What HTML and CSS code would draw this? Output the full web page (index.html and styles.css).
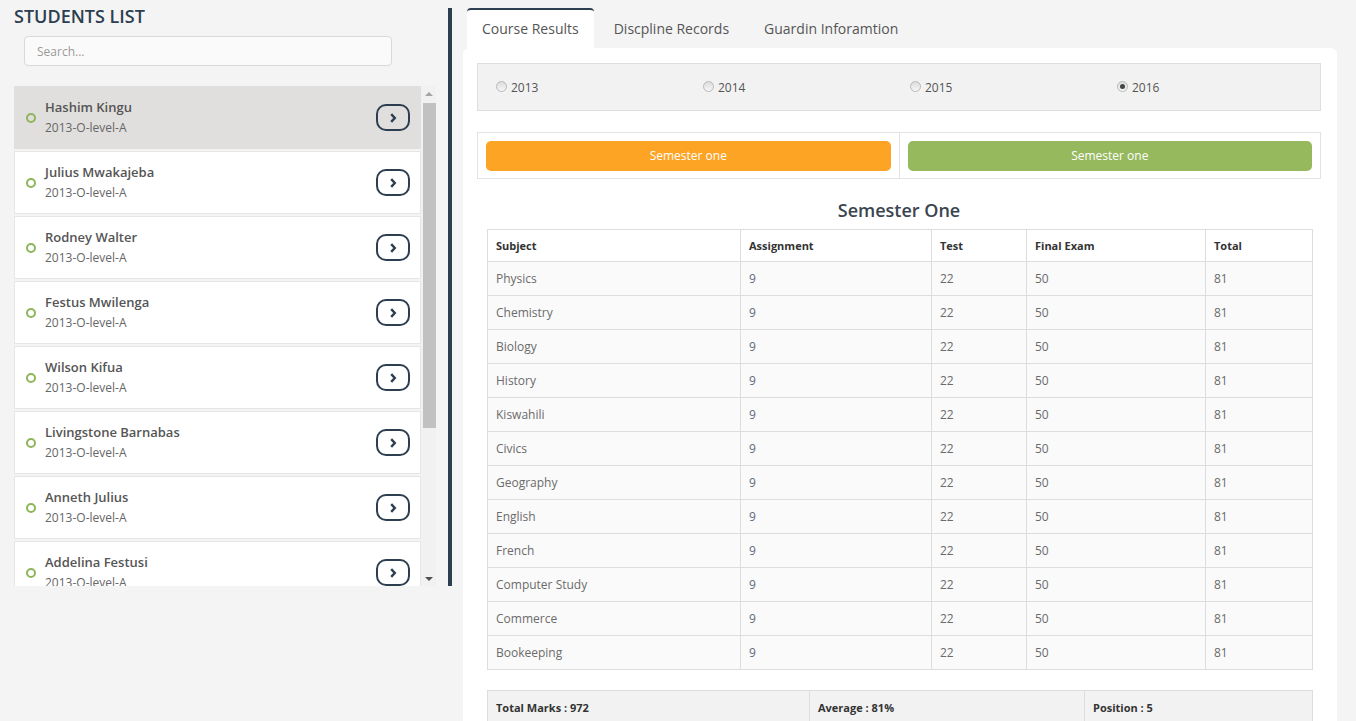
FILE: index.html
```html
<!DOCTYPE html>
<html>
<head>
<meta charset="utf-8">
<link rel="stylesheet" href="styles.css">
</head>
<body>
<div class="page">
  <aside class="sidebar">
    <h1 class="side-title">STUDENTS LIST</h1>
    <input class="search" type="text" placeholder="Search...">
    <div class="list-wrap">
      <div class="list">
        <div class="student active"><span class="ring"></span><div class="info"><div class="name">Hashim Kingu</div><div class="cls">2013-O-level-A</div></div><span class="go"><svg width="12" height="12" viewBox="0 0 12 12"><path d="M4.2 2.2 L7.8 6 L4.2 9.8" fill="none" stroke="#2c3e50" stroke-width="2.4"/></svg></span></div>
        <div class="student"><span class="ring"></span><div class="info"><div class="name">Julius Mwakajeba</div><div class="cls">2013-O-level-A</div></div><span class="go"><svg width="12" height="12" viewBox="0 0 12 12"><path d="M4.2 2.2 L7.8 6 L4.2 9.8" fill="none" stroke="#2c3e50" stroke-width="2.4"/></svg></span></div>
        <div class="student"><span class="ring"></span><div class="info"><div class="name">Rodney Walter</div><div class="cls">2013-O-level-A</div></div><span class="go"><svg width="12" height="12" viewBox="0 0 12 12"><path d="M4.2 2.2 L7.8 6 L4.2 9.8" fill="none" stroke="#2c3e50" stroke-width="2.4"/></svg></span></div>
        <div class="student"><span class="ring"></span><div class="info"><div class="name">Festus Mwilenga</div><div class="cls">2013-O-level-A</div></div><span class="go"><svg width="12" height="12" viewBox="0 0 12 12"><path d="M4.2 2.2 L7.8 6 L4.2 9.8" fill="none" stroke="#2c3e50" stroke-width="2.4"/></svg></span></div>
        <div class="student"><span class="ring"></span><div class="info"><div class="name">Wilson Kifua</div><div class="cls">2013-O-level-A</div></div><span class="go"><svg width="12" height="12" viewBox="0 0 12 12"><path d="M4.2 2.2 L7.8 6 L4.2 9.8" fill="none" stroke="#2c3e50" stroke-width="2.4"/></svg></span></div>
        <div class="student"><span class="ring"></span><div class="info"><div class="name">Livingstone Barnabas</div><div class="cls">2013-O-level-A</div></div><span class="go"><svg width="12" height="12" viewBox="0 0 12 12"><path d="M4.2 2.2 L7.8 6 L4.2 9.8" fill="none" stroke="#2c3e50" stroke-width="2.4"/></svg></span></div>
        <div class="student"><span class="ring"></span><div class="info"><div class="name">Anneth Julius</div><div class="cls">2013-O-level-A</div></div><span class="go"><svg width="12" height="12" viewBox="0 0 12 12"><path d="M4.2 2.2 L7.8 6 L4.2 9.8" fill="none" stroke="#2c3e50" stroke-width="2.4"/></svg></span></div>
        <div class="student"><span class="ring"></span><div class="info"><div class="name">Addelina Festusi</div><div class="cls">2013-O-level-A</div></div><span class="go"><svg width="12" height="12" viewBox="0 0 12 12"><path d="M4.2 2.2 L7.8 6 L4.2 9.8" fill="none" stroke="#2c3e50" stroke-width="2.4"/></svg></span></div>
      </div>
      <div class="scrollbar">
        <span class="sb-btn"><span class="tri-up"></span></span>
        <span class="sb-track"><span class="sb-thumb"></span></span>
        <span class="sb-btn"><span class="tri-down"></span></span>
      </div>
    </div>
  </aside>
  <div class="divider"></div>
  <main class="main">
    <nav class="tabs">
      <span class="tab active">Course Results</span>
      <span class="tab">Discpline Records</span>
      <span class="tab">Guardin Inforamtion</span>
    </nav>
    <section class="panel">
      <div class="years">
        <label class="year"><span class="radio"></span>2013</label>
        <label class="year"><span class="radio"></span>2014</label>
        <label class="year"><span class="radio"></span>2015</label>
        <label class="year"><span class="radio checked"></span>2016</label>
      </div>
      <div class="semesters">
        <div class="sem-cell"><button class="sem-btn orange">Semester one</button></div>
        <div class="sem-cell"><button class="sem-btn green">Semester one</button></div>
      </div>
      <h2 class="sem-title">Semester One</h2>
      <table class="results">
        <colgroup><col class="c1"><col class="c2"><col class="c3"><col class="c4"><col class="c5"></colgroup>
        <thead><tr><th>Subject</th><th>Assignment</th><th>Test</th><th>Final Exam</th><th>Total</th></tr></thead>
        <tbody>
          <tr><td>Physics</td><td class="num">9</td><td>22</td><td>50</td><td>81</td></tr>
          <tr><td>Chemistry</td><td class="num">9</td><td>22</td><td>50</td><td>81</td></tr>
          <tr><td>Biology</td><td class="num">9</td><td>22</td><td>50</td><td>81</td></tr>
          <tr><td>History</td><td class="num">9</td><td>22</td><td>50</td><td>81</td></tr>
          <tr><td>Kiswahili</td><td class="num">9</td><td>22</td><td>50</td><td>81</td></tr>
          <tr><td>Civics</td><td class="num">9</td><td>22</td><td>50</td><td>81</td></tr>
          <tr><td>Geography</td><td class="num">9</td><td>22</td><td>50</td><td>81</td></tr>
          <tr><td>English</td><td class="num">9</td><td>22</td><td>50</td><td>81</td></tr>
          <tr><td>French</td><td class="num">9</td><td>22</td><td>50</td><td>81</td></tr>
          <tr><td>Computer Study</td><td class="num">9</td><td>22</td><td>50</td><td>81</td></tr>
          <tr><td>Commerce</td><td class="num">9</td><td>22</td><td>50</td><td>81</td></tr>
          <tr><td>Bookeeping</td><td class="num">9</td><td>22</td><td>50</td><td>81</td></tr>
        </tbody>
      </table>
      <table class="summary">
        <colgroup><col class="s1"><col class="s2"><col class="s3"></colgroup>
        <tr><td>Total Marks : 972</td><td>Average : 81%</td><td>Position : 5</td></tr>
      </table>
    </section>
  </main>
</div>
</body>
</html>
```
FILE: styles.css
```css
* { box-sizing: border-box; }
html, body { margin: 0; padding: 0; height: 721px; overflow: hidden; }
body {
  background: #f4f4f4;
  font-family: "Open Sans", "Liberation Sans", sans-serif;
  color: #555;
}
.page { display: flex; align-items: flex-start; }

/* sidebar */
.sidebar { width: 436px; padding-left: 14px; padding-top: 7px; flex: none; }
.side-title {
  margin: 0; font-size: 18px; line-height: 18px; font-weight: 600;
  color: #2c3e50; letter-spacing: 0;
}
.search {
  display: block; margin: 11px 0 0 10px; width: 368px; height: 30px;
  border: 1px solid #d9d9d9; border-radius: 4px; background: #fafafa;
  padding: 0 12px; font-family: inherit; font-size: 12px; color: #555; outline: none;
}
.search::placeholder { color: #9a9a9a; }
.list-wrap { display: flex; margin-top: 20px; height: 500px; overflow: hidden; }
.list { width: 407px; flex: none; }
.student {
  height: 63px; margin-bottom: 2px; background: #fff; border: 1px solid #e6e6e6;
  display: flex; align-items: center; padding: 0 10px 0 11px;
}
.student.active { background: #e0dfdd; border-color: #e0dfdd; }
.ring {
  width: 10px; height: 10px; border-radius: 50%; border: 2px solid #8db65a;
  flex: none; margin-right: 9px;
}
.info { flex: 1; margin-top: -1px; }
.name { font-size: 13px; line-height: 20px; font-weight: 600; color: #555; }
.cls { font-size: 12px; line-height: 20px; color: #666; margin-top: 1px; }
.go {
  width: 34px; height: 27px; border: 2px solid #2c3e50; border-radius: 10px;
  display: flex; align-items: center; justify-content: center; flex: none;
}
.go svg { display: block; }

.scrollbar { width: 15px; flex: none; background: #f1f1f1; display: flex; flex-direction: column; }
.sb-btn { height: 15px; display: flex; align-items: center; justify-content: center; flex: none; }
.sb-track { flex: 1; padding: 2px 0 0 2px; display: flex; flex-direction: column; }
.sb-thumb { height: 325px; background: #c1c1c1; width: 13px; }
.tri-up { width: 0; height: 0; border-left: 4px solid transparent; border-right: 4px solid transparent; border-bottom: 4px solid #a3a3a3; }
.tri-down { width: 0; height: 0; border-left: 4px solid transparent; border-right: 4px solid transparent; border-top: 4px solid #505050; }

.divider { width: 4px; height: 578px; background: #2c3e50; margin: 8px 0 0 12px; flex: none; }

/* main */
.main { width: 885px; margin-left: 11px; padding-top: 8px; flex: none; }
.tabs { display: flex; padding-left: 4px; height: 40px; }
.tab {
  padding: 0 15px; font-size: 14px; line-height: 38px; color: #555; margin-right: 5px;
  border-top: 2px solid transparent; border-radius: 4px 4px 0 0;
}
.tab.active { background: #fff; border-top-color: #2c3e50; }
.panel {
  width: 874px; background: #fff; border-radius: 6px 6px 0 0;
  padding: 15px 16px 0 14px; height: 700px;
}
.years {
  height: 48px; background: #f2f2f2; border: 1px solid #dedede;
  display: grid; grid-template-columns: 207px 207px 207px 207px; padding-left: 18px;
  align-items: center;
}
.year { display: flex; align-items: center; font-size: 12px; color: #555; padding-top: 0; }
.radio {
  width: 11px; height: 11px; border-radius: 50%; border: 1px solid #b9b9b9;
  background: linear-gradient(#dcdcdc, #f7f7f7); margin-right: 4px; margin-top: -2px;
  display: flex; align-items: center; justify-content: center;
}
.radio.checked::after { content: ""; width: 5px; height: 5px; border-radius: 50%; background: #444; }
.semesters {
  margin-top: 21px; height: 47px; border: 1px solid #e3e3e3; display: flex;
}
.sem-cell { flex: 1; padding: 8px; }
.sem-cell + .sem-cell { border-left: 1px solid #e3e3e3; }
.sem-btn {
  width: 100%; height: 30px; border: none; border-radius: 5px; color: #fff;
  font-family: inherit; font-size: 12px; padding: 0 0 2px;
}
.orange { background: #fea424; }
.green { background: #96b95e; }
.sem-title {
  margin: 18px 0 6px; text-align: center; font-size: 18px; line-height: 26px;
  font-weight: 600; color: #3a4550;
}
table { border-collapse: collapse; margin-left: 10px; width: 825px; table-layout: fixed; }
.c1 { width: 253px; } .c2 { width: 191px; } .c3 { width: 95px; } .c4 { width: 179px; } .c5 { width: 107px; }
.results th, .results td { border: 1px solid #dddddd; padding: 0 8px; text-align: left; }
.results th { height: 32px; font-size: 11px; font-weight: 700; color: #333; background: #fff; }
.results td { height: 34px; font-size: 12px; color: #6b6b6b; background: #fafafa; }
.results td.num { color: #5f6a7c; }
.summary { margin-top: 20px; }
.s1 { width: 322px; } .s2 { width: 275px; } .s3 { width: 228px; }
.summary td {
  border: 1px solid #dddddd; background: #f2f2f2; height: 34px; padding: 0 8px;
  font-size: 11px; font-weight: 700; color: #333;
}
```
